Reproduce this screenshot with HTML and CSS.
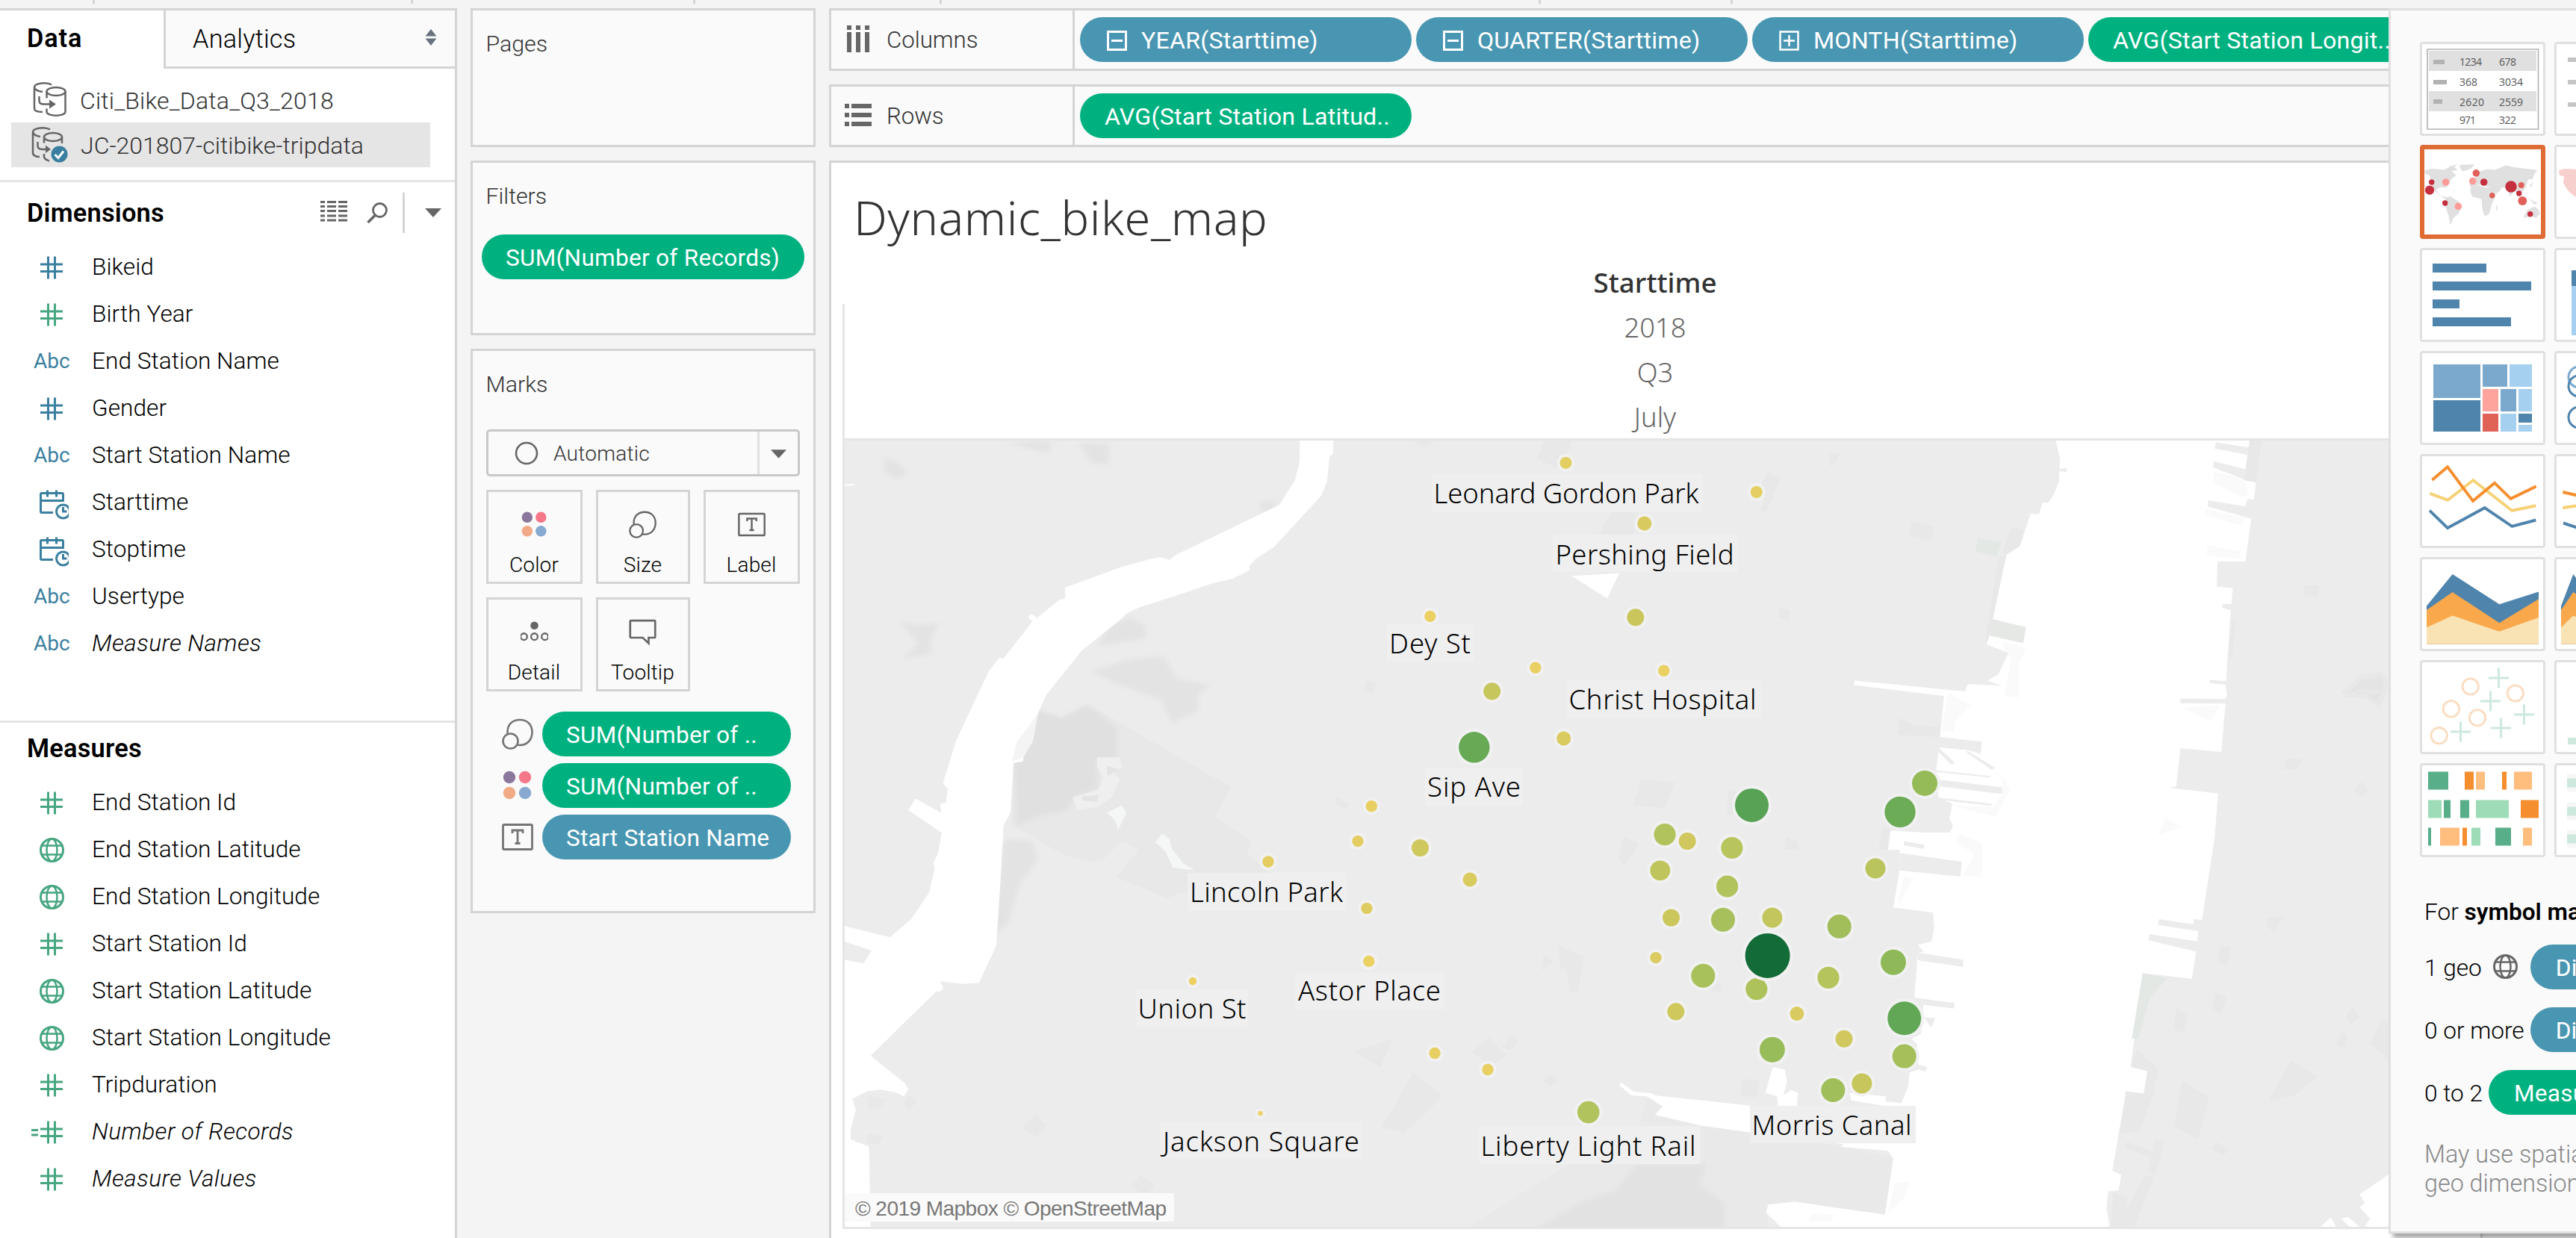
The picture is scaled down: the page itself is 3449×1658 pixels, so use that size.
FILE: index.html
```html
<!DOCTYPE html>
<html lang="en">
<head>
<meta charset="utf-8">
<title>Dynamic_bike_map</title>
<link rel="stylesheet" href="styles.css">
</head>
<body>
<svg class="defs" width="0" height="0" aria-hidden="true">
  <symbol id="hash" viewBox="0 0 60 63"><path d="M32.5 17.5v30M41.5 17.5v30M22 28h30M22 37.5h30" fill="none" stroke="currentColor" stroke-width="3"/></symbol>
  <symbol id="calc-hash" viewBox="0 0 60 63"><path d="M32.5 17.5v30M41.5 17.5v30M22 28h30M22 37.5h30M10 29.5h9M10 36h9" fill="none" stroke="currentColor" stroke-width="3"/></symbol>
  <symbol id="globe" viewBox="0 0 60 63"><g fill="none" stroke="currentColor"><circle cx="37.5" cy="32.5" r="15" stroke-width="3"/><ellipse cx="37.5" cy="32.5" rx="7" ry="15" stroke-width="2.5"/><path d="M24 26.5h27M24 38.500h27" stroke-width="2.5"/></g></symbol>
  <symbol id="datetime" viewBox="0 0 60 63"><g fill="none" stroke="currentColor" stroke-width="3"><path d="M39 45.500H24q-1.500 0-1.500-1.500V21q0-1.500 1.500-1.500h27q1.500 0 1.500 1.500v8.500H23M31.500 15.500v9M43.500 15.500v9"/><circle cx="52.500" cy="44" r="9"/><path d="M52.500 38v6h5"/></g></symbol>
  <symbol id="size" viewBox="0 0 42 42"><g fill="none" stroke="currentColor" stroke-width="2.600"><path d="M7.500 20.500V18C7.500 8.500 14 2 24 2s16.500 6.500 16.500 16.500S34 36 24 36l-4.500-.5"/><circle cx="11.500" cy="30.500" r="10"/></g></symbol>
  <symbol id="color" viewBox="0 0 42 42"><circle cx="10" cy="10" r="8.200" fill="#8c779c"/><circle cx="31" cy="10" r="8.200" fill="#f7778a"/><circle cx="10" cy="31" r="8.200" fill="#f2a985"/><circle cx="31" cy="31" r="8.200" fill="#88a9cf"/></symbol>
  <symbol id="label" viewBox="0 0 42 42"><rect x="1.500" y="4.500" width="39" height="33" rx="1.500" fill="none" stroke="currentColor" stroke-width="2.800"/><path d="M14 16v-4h14v4M21 12v17M17.500 29.500h7" fill="none" stroke="currentColor" stroke-width="2.800"/></symbol>
</svg>

<div class="toolbar"><i></i><i></i><i></i><i></i><i></i><i></i></div>

<div class="workspace">
  <aside class="data-pane">
    <div class="tabs">
      <div class="tab active">Data</div>
      <div class="tab">Analytics
        <svg width="16" height="22" viewBox="0 0 16 22"><path d="M8 0l7.500 9.500H.5zM8 22l7.500-9.500H.5z" fill="#68727f"/></svg>
      </div>
    </div>
    <div class="sources">
      <div class="source">
        <svg width="50" height="50" viewBox="0 0 50 50"><g fill="none" stroke="#666" stroke-width="2.500"><path d="M26 4.500C20 .5 3 2 3 8v28c0 3 4 5 11 5M3 8c1 4 5 5 11 6"/><ellipse cx="32" cy="13.500" rx="12.500" ry="5.500"/><path d="M19.500 13.500v9M44.500 13.500v27c0 7-25 7-25 0v-4M9.500 20v6c0 3 2 4.500 6 4.500h9"/></g><path d="M23 24.500l9 6-9 6z" fill="#666"/></svg>
        <span>Citi_Bike_Data_Q3_2018</span>
      </div>
      <div class="source selected">
        <svg width="50" height="50" viewBox="0 0 50 50"><g fill="none" stroke="#666" stroke-width="2.500"><path d="M25 4.500C19 .5 2 2 2 8v28c0 3 4 5 9 5M2 8c1 4 5 5 10 6"/><ellipse cx="29" cy="14.500" rx="12" ry="5.500"/><path d="M17 14.500v8M41 14.500V23M17 37v4c0 3 3 4 7 5.500M8.500 21v5c0 3 2 5 6 5h6"/></g><path d="M19 25.500l7 5.500-7 5z" fill="#666"/><circle cx="37.500" cy="37.500" r="11" fill="#3a7f9f"/><path d="M31.500 38l4.500 4.500 7-9" fill="none" stroke="#fff" stroke-width="3"/></svg>
        <span>JC-201807-citibike-tripdata</span>
      </div>
    </div>
    <section class="fields dimensions">
      <header>
        <h2>Dimensions</h2>
        <svg width="36" height="28" viewBox="0 0 36 28"><path d="M0 1.500h36M0 7.500h36M0 13.500h36M0 20h36M0 26h36" stroke="#666" stroke-width="3" stroke-dasharray="6 3 12 3 12 3"/></svg>
        <svg width="28" height="28" viewBox="0 0 28 28"><ellipse cx="17.500" cy="10.500" rx="9" ry="9" fill="none" stroke="#666" stroke-width="2.800"/><path d="M11.500 17L1.500 27" stroke="#666" stroke-width="3.500"/></svg>
        <b class="rule"></b>
        <svg width="22" height="12" viewBox="0 0 22 12"><path d="M0 0h22L11 12z" fill="#666"/></svg>
      </header>
      <ul>
        <li><svg class="dim"><use href="#hash"/></svg>Bikeid</li>
        <li><svg class="mea"><use href="#hash"/></svg>Birth Year</li>
        <li><span class="abc">Abc</span>End Station Name</li>
        <li><svg class="dim"><use href="#hash"/></svg>Gender</li>
        <li><span class="abc">Abc</span>Start Station Name</li>
        <li><svg class="dim"><use href="#datetime"/></svg>Starttime</li>
        <li><svg class="dim"><use href="#datetime"/></svg>Stoptime</li>
        <li><span class="abc">Abc</span>Usertype</li>
        <li class="generated"><span class="abc">Abc</span>Measure Names</li>
      </ul>
    </section>
    <section class="fields measures">
      <header><h2>Measures</h2></header>
      <ul>
        <li><svg class="mea"><use href="#hash"/></svg>End Station Id</li>
        <li><svg class="mea"><use href="#globe"/></svg>End Station Latitude</li>
        <li><svg class="mea"><use href="#globe"/></svg>End Station Longitude</li>
        <li><svg class="mea"><use href="#hash"/></svg>Start Station Id</li>
        <li><svg class="mea"><use href="#globe"/></svg>Start Station Latitude</li>
        <li><svg class="mea"><use href="#globe"/></svg>Start Station Longitude</li>
        <li><svg class="mea"><use href="#hash"/></svg>Tripduration</li>
        <li class="generated"><svg class="mea"><use href="#calc-hash"/></svg>Number of Records</li>
        <li class="generated"><svg class="mea"><use href="#hash"/></svg>Measure Values</li>
      </ul>
    </section>
  </aside>

  <div class="cards">
    <section class="card pages"><h3>Pages</h3></section>
    <section class="card filters"><h3>Filters</h3><div class="pill green">SUM(Number of Records)</div></section>
    <section class="card marks">
      <h3>Marks</h3>
      <div class="mark-type">
        <svg width="32" height="32" viewBox="0 0 32 32"><circle cx="16" cy="16" r="14" fill="none" stroke="#666" stroke-width="2.600"/></svg>
        <span>Automatic</span>
        <div class="arrow"><svg width="21" height="12" viewBox="0 0 22 12"><path d="M0 0h22L11 12z" fill="#666"/></svg></div>
      </div>
      <div class="shelves">
        <div><svg><use href="#color"/></svg>Color</div>
        <div><svg><use href="#size"/></svg>Size</div>
        <div><svg><use href="#label"/></svg>Label</div>
        <div><svg viewBox="0 0 42 42"><circle cx="21" cy="11" r="6" fill="#666"/><g fill="none" stroke="#666" stroke-width="2.600"><circle cx="5" cy="28" r="5"/><circle cx="21" cy="28" r="5"/><circle cx="37" cy="28" r="5"/></g></svg>Detail</div>
        <div><svg viewBox="0 0 42 42"><path d="M3 3.500h36q1 0 1 1v24q0 1-1 1h-9v8.500l-9-8.500H3q-1 0-1-1v-24q0-1 1-1z" fill="none" stroke="#666" stroke-width="3"/></svg>Tooltip</div>
      </div>
      <div class="encodings">
        <div><svg><use href="#size"/></svg><span class="pill green">SUM(Number of ..</span></div>
        <div><svg><use href="#color"/></svg><span class="pill green">SUM(Number of ..</span></div>
        <div><svg><use href="#label"/></svg><span class="pill blue">Start Station Name</span></div>
      </div>
    </section>
  </div>

  <main>
    <div class="shelf">
      <div class="shelf-name"><svg width="36" height="36" viewBox="0 0 36 36"><path d="M3 0h6v6H3zM15 0h6v6h-6zM27 0h6v6h-6zM3 9h6v27H3zM15 9h6v27h-6zM27 9h6v27h-6z" fill="#666"/></svg>Columns</div>
      <div class="pill blue"><svg width="27" height="27" viewBox="0 0 27 27"><path d="M1.500 1.500h24v24h-24zM6 13.500h15" fill="none" stroke="#fff" stroke-width="3"/></svg>YEAR(Starttime)</div>
      <div class="pill blue"><svg width="27" height="27" viewBox="0 0 27 27"><path d="M1.500 1.500h24v24h-24zM6 13.500h15" fill="none" stroke="#fff" stroke-width="3"/></svg>QUARTER(Starttime)</div>
      <div class="pill blue"><svg width="27" height="27" viewBox="0 0 27 27"><path d="M1.500 1.500h24v24h-24zM6 13.500h15M13.500 6v15" fill="none" stroke="#fff" stroke-width="2.500"/></svg>MONTH(Starttime)</div>
      <div class="pill green">AVG(Start Station Longit..</div>
    </div>
    <div class="shelf">
      <div class="shelf-name"><svg width="36" height="36" viewBox="0 0 36 36"><path d="M0 3h6v6H0zM0 15h6v6H0zM0 27h6v6H0zM9 3h27v6H9zM9 15h27v6H9zM9 27h27v6H9z" fill="#666"/></svg>Rows</div>
      <div class="pill green">AVG(Start Station Latitud..</div>
    </div>
    <section class="sheet">
      <h1>Dynamic_bike_map</h1>
      <div class="header-field">Starttime</div>
      <div class="pane">
        <div class="header-value">2018</div>
        <div class="header-value">Q3</div>
        <div class="header-value">July</div>
        <svg class="map" width="2170" height="1053" viewBox="0 0 2170 1053">
          <defs><filter id="soft" x="-10%" y="-10%" width="120%" height="120%"><feGaussianBlur stdDeviation="5"/></filter></defs>
          <rect width="2170" height="1053" fill="#ececec"/>
          <!-- western half: meadows, parks, Hackensack river -->
          <g transform="translate(-11 -10) scale(.70153 .6875)">
            <g fill="#e3e3e3" filter="url(#soft)">
              <path d="M92 45L120 60 137 78 115 90 90 75zM120 365L150 375 195 370 180 400 180 430 125 440 155 410zM485 465L560 440 625 435 650 480 715 490 690 510 690 540 640 565 620 520 540 490zM520 375L560 358 590 375 590 400 500 415zM330 790L375 795 385 830 350 880 325 960 300 975 318 800zM460 20L520 20 520 60 490 60zM325 18L410 15 405 40zM1100 14L1140 14 1120 25zM808 135L840 130 830 155 808 150z"/>
            </g>
            <path fill="#e8e8e8" d="M385 540L430 557 478 527 753 690 722 748 792 795 783 818 828 856 672 860 670 895 655 895 632 906 533 865 577 812 545 794 512 828 484 835 430 820 334 762 340 642z"/>
            <path fill="#e0e0e0" filter="url(#soft)" d="M385 540L430 555 478 530 537 575 535 630 495 640 500 690 455 710 440 735 390 745 345 765 338 642z"/>
            <path fill="#efefef" d="M497 632L540 632 545 650 530 662 540 675 525 710 500 728 460 735 450 710 500 695 508 672 498 650z"/>
            <path fill="#e4e4e4" d="M515 648L540 655 518 668zM468 708L500 705 498 718 470 716z"/>
            <path fill="#f4f7f6" d="M516 740L545 725 553 740 538 772 530 752zM608 797L622 780 635 790 640 810 662 838 683 852 642 846 628 815z"/>
            <path fill="#e8e8e8" d="M1350 14L1405 14 1383 72 1337 50zM1012 480L1032 488 1022 507 1005 500zM956 708L978 722 972 733 950 720zM988 1205L1062 1180 1038 1236zM1101 1246L1157 1291 1130 1320 1083 1363 1040 1352zM1245 1176L1278 1210 1250 1235 1213 1205zM1290 1173L1302 1185 1285 1202 1270 1195zM1378 997L1426 1020 1415 1091 1399 1088 1393 1045 1381 1040zM380 1328L402 1348 380 1372 355 1352zM580 1445L608 1467 590 1485 562 1468zM1478 155L1530 155 1520 200 1455 198zM1362 1250L1378 1262 1363 1275 1348 1262zM1350 1015L1367 1028 1345 1048zM140 1290L155 1302 138 1318 127 1306zM1535 675L1600 680 1580 730 1520 725z"/>
            <path fill="#fff" d="M884 14H948V40L941 45 936 95 925 122 834 223 800 245 787 260 790 266 755 284 720 292 708 296 650 316 582 338 555 350 540 365 468 424 400 510 385 545 375 585 357 630 356 640 338 642 332 740 319 763 313 870 305 998 272 1071 240 1073 197 1068 204 1080 198 1088 190 1088 65 1213 130 1266 137 1278 128 1292 112 1284 84 1279 58 1282 30 1297 37 1318 27 1357V1376L62 1390 65 1546H14V1026L52 1033 67 1008 14 990V960L102 982 143 946 177 895 188 845 184 840 193 820 201 779 137 734 151 712 200 740 198 722 209 720 212 692 203 683 228 600 290 465 310 438 318 440 374 367 366 358 372 352 383 360 425 325 436 322V301L540 262 600 245 618 242 636 247 648 237 835 145 845 140 875 92 884 55zM1403 278L1494 273 1471 322zM14 100L34 99V102L14 103z"/>
            <path fill="#f4f4f4" d="M385 545L375 600 357 632 335 640 345 600 368 570z"/>
            <path fill="#e8e8e8" d="M58 1290L95 1300 85 1312 62 1318zM60 1365L88 1370 80 1385 58 1382z"/>
          </g>
          <!-- eastern half: Jersey City waterfront, Hudson river, Manhattan -->
          <g transform="translate(969 -10) scale(.70153 .6875)">
            <path fill="#e9e9e9" d="M150 1295L180 1310 165 1328 346 1362 520 1390 620 1413 604 1522 377 1500 382 1546H-190L0 1424 135 1350z"/>
            <path fill="#e2e2e2" filter="url(#soft)" d="M-62 1552L20 1500 90 1475 130 1424H262L250 1465 300 1502 295 1552z"/>
            <path fill="#e8e8e8" d="M655 172L698 182 692 210 650 200zM845 182L868 188 862 220 836 237 828 232zM380 75L405 90 375 157 367 148 375 130 362 115zM498 38L518 42 512 55 500 66zM404 340L422 345 420 365 400 358zM140 677L194 680 180 730 125 725zM105 787L132 797 128 815 105 840 95 830zM417 787L438 797 437 812 413 810zM632 555L660 570 713 572 709 592 628 588zM600 770L612 770 610 812 592 808zM330 1257L365 1262 358 1295 328 1290zM305 695L325 700 320 745 302 742zM275 1068L293 1072 290 1090 272 1088zM822 240L836 237 800 412 795 405z"/>
            <path fill="#e4e8e5" d="M782 204L827 212 818 240 776 230z"/>
            <path fill="#fff" d="M930 14L938 50 936 95 925 122 915 136 905 135 898 158 882 157 862 220 836 237 825 290 803 396 798 412 840 428 820 470 800 482 827 492 762 489 757 503 722 500 546 482 545 491 717 512 709 592 702 657 706 710 733 722 727 750 734 765 728 778 680 778 615 774 610 812 632 812V852L620 924 696 934 698 965 693 990 667 997 678 1010 667 1012 660 1100 678 1103 673 1170 655 1180 665 1190 668 1240 651 1245 648 1275 635 1305 606 1302V1292L536 1285 540 1300 600 1310 520 1390 610 1398 620 1413 604 1522 518 1510 432 1497 382 1503 377 1518 405 1546H1033L1027 1510 1030 1477 1050 1475 1055 1445 1038 1437 1064 1282 1098 1287 1105 1243 1073 1235 1080 1180 1096 1052 1190 1063 1198 1010 1107 988 1109 976 1200 990 1202 970 1125 958 1127 947 1193 957V947L1209 948 1233 790 1240 702 1146 691 1160 688 1168 614 1246 621 1254 527 1168 526V517L1254 518 1257 510 1254 490 1224 487V481L1255 483 1264 345 1248 340V333L1265 333 1268 302 1237 299 1239 250H1292L1303 167 1220 143 1221 131 1292 143 1296 128 1308 130 1312 96 1290 90 1230 67 1232 55 1292 70 1296 42 1233 30 1236 18 1298 28 1300 14z"/>
            <path fill="#fff" d="M97 1270L101 1265 125 1283 160 1286 165 1290 346 1310 400 1315 560 1330V1390L346 1362 258 1350 165 1328 180 1312 150 1292 120 1290zM390 1235L413 1240 417 1265 410 1290 425 1280 438 1285 436 1312 400 1312 398 1292 376 1285zM1600 1420L1510 1483 1520 1500 1510 1508 1530 1530 1520 1546H1600zM1435 1546L1455 1528 1465 1546zM1475 1530L1488 1527 1510 1546H1490z"/>
            <path fill="#ececec" d="M709 592L789 601 787 625 765 618 705 612zM763 620L814 652 808 656 757 620zM697 612L706 612 738 643 730 645zM702 657L806 668 805 671 702 660zM705 675L828 690 827 703 705 688zM706 710L808 722 807 726 706 714zM632 818L751 835 748 864 632 852zM640 795L680 802 678 810 640 803zM667 1012L754 1026 753 1040 667 1027zM662 1100L737 1110 736 1121 662 1112zM678 1137L700 1140 692 1158zM665 1230L684 1234 682 1244 665 1238zM936 70L951 68V76L936 74z"/>
            <path fill="#e5e8e5" d="M809 362L873 378 868 409 801 394z"/>
            <path fill="#fafafa" d="M825 405L873 418 860 450 860 515 832 512 845 440zM725 505L768 530 740 560 735 582 712 580zM828 665L843 695 815 748 730 725 810 728 828 703zM745 780L790 800V865L752 862 775 820 740 800zM640 862L658 868 632 918 628 915zM622 1460L652 1458 640 1490 610 1520zM1140 750L1172 768 1125 782zM1170 535L1245 530 1225 560zM1232 75L1290 90 1298 120 1285 125 1230 95zM1216 148L1290 165 1285 180 1215 160zM1220 218L1282 230 1284 245 1218 238zM470 1520L508 1523 500 1535 455 1535z"/>
            <path fill="#e8e8e8" d="M1300 14L1323 14 1312 96 1290 92zM1268 360L1274 370 1266 440 1260 435zM1405 297L1433 297 1430 318 1403 315zM1370 633L1400 635 1390 655 1364 655zM1513 679L1528 693 1515 710 1500 695zM1475 505L1510 470 1552 465 1568 490 1548 537 1520 515 1485 515zM1335 945L1365 940 1345 972 1333 960zM1244 998L1264 1003 1258 1038 1240 1030zM1235 1090L1256 1100 1245 1130 1228 1120zM1160 1120L1183 1135 1172 1170 1155 1160zM1170 1262L1223 1292 1202 1375 1156 1350zM1380 1222L1430 1255 1385 1290 1335 1302zM1495 1120L1510 1138 1495 1152 1482 1140zM1476 1168L1486 1172 1482 1198 1465 1193zM1552 1140L1568 1150V1225L1530 1190zM1235 1380L1260 1395 1250 1408 1228 1395zM1120 1375L1138 1380 1120 1445 1105 1438zM1065 1380L1115 1400 1110 1410 1062 1392zM1085 1200L1128 1240 1115 1275 1120 1280 1090 1360 1053 1365 1064 1282 1098 1287 1105 1243 1075 1235zM1100 1445L1118 1450 1080 1546H1035L1040 1480 1068 1490 1060 1520z"/>
            <path fill="#e4e8e5" d="M1096 1052L1143 1062 1110 1100 1088 1180 1075 1180z"/>
            <path fill="#e4e4e4" d="M1490 505L1515 480 1550 475 1556 490 1543 525 1520 505z M1503 500L1550 500 1545 508 1503 508z" fill-rule="evenodd"/>
          </g>
          <!-- stations -->
          <g class="stations">
            <circle cx="965.500" cy="29.900" r="8" fill="#e3ce62"/><circle cx="1220.800" cy="69" r="8" fill="#e5ce62"/>
            <circle cx="1070.800" cy="111" r="9.500" fill="#d8ca5f"/><circle cx="783.800" cy="235.400" r="7.700" fill="#edd062"/>
            <circle cx="1058.800" cy="236.800" r="11.500" fill="#cbc65c"/><circle cx="924.800" cy="304.200" r="7.700" fill="#eacf62"/>
            <circle cx="1096.700" cy="308.300" r="7.700" fill="#ebd062"/><circle cx="866.600" cy="335.800" r="11.500" fill="#c6c65c"/>
            <circle cx="842.800" cy="410.800" r="20.700" fill="#68a955"/><circle cx="962.700" cy="399" r="9.500" fill="#dacb60"/>
            <circle cx="705.300" cy="489.800" r="7.700" fill="#e9cf62"/><circle cx="687" cy="536.600" r="7.700" fill="#e4cd61"/>
            <circle cx="770.500" cy="545.500" r="11.500" fill="#cec85d"/><circle cx="837.100" cy="588" r="9.500" fill="#d9cb60"/>
            <circle cx="567" cy="564" r="7.700" fill="#e4cd61"/><circle cx="699" cy="626.600" r="7.700" fill="#dfcc61"/>
            <circle cx="701.800" cy="697.400" r="7.700" fill="#ebd062"/><circle cx="466" cy="724" r="5.200" fill="#efd163"/>
            <circle cx="790" cy="820.500" r="7.700" fill="#e8cf62"/><circle cx="861" cy="842.500" r="7.700" fill="#e8cf62"/>
            <circle cx="556.500" cy="901" r="3.300" fill="#f0d264"/><circle cx="995.700" cy="899.600" r="14.800" fill="#b0c35c"/>
            <circle cx="1214.500" cy="488.400" r="22.500" fill="#58a255"/><circle cx="1446" cy="458.900" r="17" fill="#95bb58"/>
            <circle cx="1413" cy="497.400" r="20.700" fill="#6cac57"/><circle cx="1098" cy="527.600" r="14.600" fill="#b1c35c"/>
            <circle cx="1128.200" cy="536.600" r="11.500" fill="#d0c85e"/><circle cx="1187.900" cy="545.500" r="14.600" fill="#b8c45c"/>
            <circle cx="1091.800" cy="575.800" r="13.400" fill="#bfc55c"/><circle cx="1380" cy="573" r="13.500" fill="#bac45c"/>
            <circle cx="1181.600" cy="597" r="14.600" fill="#b1c35c"/><circle cx="1106.500" cy="639" r="11.500" fill="#cbc75d"/>
            <circle cx="1176" cy="641.800" r="16" fill="#a8c05b"/><circle cx="1241.900" cy="639" r="13.500" fill="#c3c65d"/>
            <circle cx="1331.700" cy="650.700" r="16" fill="#a2be5a"/><circle cx="1220.800" cy="734.600" r="14.600" fill="#aec25c"/>
            <circle cx="1235.600" cy="689.900" r="30" fill="#136c37"/><circle cx="1086" cy="692.600" r="7.700" fill="#dccb60"/>
            <circle cx="1404" cy="698.800" r="17" fill="#8fb958"/><circle cx="1317" cy="719.400" r="14.600" fill="#b6c45c"/>
            <circle cx="1149.300" cy="716.700" r="16" fill="#a9c15b"/><circle cx="1112.800" cy="764.800" r="11.500" fill="#cec85d"/>
            <circle cx="1274.900" cy="767.600" r="9.500" fill="#dacb60"/><circle cx="1338" cy="801.300" r="11.500" fill="#d0c85e"/>
            <circle cx="1418.700" cy="824.600" r="16" fill="#a5bf5b"/><circle cx="1418.700" cy="773.800" r="22.500" fill="#61a756"/>
            <circle cx="1241.900" cy="815.700" r="17" fill="#98bc59"/><circle cx="1323.300" cy="870" r="16" fill="#a0be5a"/>
            <circle cx="1361.900" cy="861" r="13.500" fill="#c6c65d"/>
          </g>
          <g fill="#efefef">
            <rect x="786" y="45" width="363" height="50"/><rect x="948" y="126" width="248" height="50"/><rect x="726" y="246" width="117" height="50"/>
            <rect x="967" y="321" width="260" height="51"/><rect x="777" y="439" width="131" height="50"/><rect x="459" y="579" width="213" height="51"/>
            <rect x="603" y="712" width="200" height="50"/><rect x="390" y="735" width="150" height="51"/><rect x="422" y="912" width="271" height="50"/>
            <rect x="849" y="918" width="297" height="51"/><rect x="1212" y="891" width="222" height="50"/>
          </g>
          <g class="station-names">
            <text x="788.500" y="84" textLength="355">Leonard Gordon Park</text>
            <text x="951.500" y="165.500" textLength="239">Pershing Field</text>
            <text x="729" y="285" textLength="109">Dey St</text>
            <text x="969.500" y="360" textLength="251">Christ Hospital</text>
            <text x="780" y="477" textLength="125">Sip Ave</text>
            <text x="462" y="618" textLength="205">Lincoln Park</text>
            <text x="607" y="750" textLength="191">Astor Place</text>
            <text x="392.500" y="774" textLength="145">Union St</text>
            <text x="426" y="952" textLength="263">Jackson Square</text>
            <text x="851.500" y="957.500" textLength="288">Liberty Light Rail</text>
            <text x="1214.500" y="930" textLength="214">Morris Canal</text>
          </g>
          <rect x="0" y="1008" width="441" height="38" fill="#fafafa"/>
          <text class="credit" x="14" y="1038" textLength="417">© 2019 Mapbox © OpenStreetMap</text>
        </svg>
      </div>
    </section>
  </main>
</div>

<aside class="show-me">
  <div class="charts">
    <div class="chart">
      <svg viewBox="0 0 168 126"><path d="M12 12h144v27H12zM12 66h144v27H12z" fill="#e0e0e0"/><path d="M10 10h148.500v107H10z" fill="none" stroke="#b2b2b2" stroke-width="1.600"/><path d="M18 24h15v6H18zM18 51h18v6H18zM18 77h12v6H18z" fill="#b2b2b2"/>
        <g class="tiny"><text x="53" y="31.500" textLength="30">1234</text><text x="106" y="31.500" textLength="23">678</text><text x="53" y="58.500" textLength="24">368</text><text x="106" y="58.500" textLength="32">3034</text><text x="53" y="85.500" textLength="33">2620</text><text x="106" y="85.500" textLength="32">2559</text><text x="53" y="110" textLength="22">971</text><text x="106" y="110" textLength="23">322</text></g></svg>
    </div>
    <div class="chart"><svg viewBox="0 0 168 126"><path d="M18 21h20v6H18zM18 51h20v6H18zM18 81h20v6H18z" fill="#c4c4c4"/></svg></div>

    <div class="chart chosen">
      <svg viewBox="0 0 168 126">
        <g transform="translate(-60 -154) scale(.33333 .35714)" fill="#e0e0e0">
          <path d="M200 527L225 521 280 524 300 512 332 505 318 515 332 525 308 530 326 545 305 560 298 575 285 592 262 590 245 600 262 622 290 628 282 634 258 620 240 603 222 575 220 545 200 540zM342 506L400 505 385 520 352 531 340 515zM282 632L300 624 330 640 350 660 335 690 315 705 303 733 296 700 280 655zM385 590L405 580 440 590 470 590 485 620 470 650 458 690 440 699 430 670 428 635 390 625 382 605zM380 570L400 555 420 530 450 522 480 525 525 508 560 515 652 526 640 540 632 560 615 560 605 590 590 610 575 600 580 625 560 605 542 625 530 595 510 590 500 605 485 615 465 590 440 585 415 580 395 590 380 588zM598 698L612 675 640 662 655 672 662 690 645 706 625 695 600 706zM484 668L493 655 490 680zM612 625L630 640 655 650 640 655zM620 585L635 570 628 590z"/>
        </g>
        <g fill="#fe9c98"><circle cx="34.700" cy="50" r="4.800"/><circle cx="70.700" cy="48.500" r="4.800"/><circle cx="51.300" cy="82.400" r="4.800"/></g>
        <g fill="#e2605a"><circle cx="75.300" cy="37.800" r="4.800"/><circle cx="135.700" cy="54" r="4"/><circle cx="137.300" cy="75" r="6"/><circle cx="96.700" cy="67.800" r="3.700"/></g>
        <g fill="#c5303f"><circle cx="13" cy="60.600" r="6.200"/><circle cx="15.700" cy="50" r="3.700"/><circle cx="85.700" cy="50" r="4.800"/><circle cx="122" cy="56" r="7.700"/><circle cx="132.700" cy="65" r="3.700"/><circle cx="33.700" cy="78" r="3.700"/><circle cx="147.700" cy="92.800" r="3.700"/></g>
      </svg>
    </div>
    <div class="chart"><svg viewBox="0 0 168 126"><path d="M6 34l8-2 20 1v40l-8-5-8-7-6-10 1-9-6-1z" fill="#f7d0ce"/></svg></div>

    <div class="chart"><svg viewBox="0 0 168 126"><path d="M17 21h72v12H17zM17 45h132v12H17zM17 69h36v12H17zM17 93h105v12H17z" fill="#4f84ad"/></svg></div>
    <div class="chart"><svg viewBox="0 0 168 126"><path d="M23 30h20v21H23z" fill="#4f84ad"/><path d="M23 51h20v66H23z" fill="#a5d0f0"/></svg></div>

    <div class="chart">
      <svg viewBox="0 0 168 126"><path d="M18 18h63v45H18zM84 18h33v30H84zM108 51h21v30h-21z" fill="#7ba9ce"/><path d="M18 66h63v42H18zM132 84h18v12h-18z" fill="#4f84ad"/><path d="M120 18h30v30h-30zM132 51h18v30h-18zM108 84h21v24h-21zM132 99h18v9h-18z" fill="#a5d0f0"/><path d="M84 51h21v30H84z" fill="#fea49c"/><path d="M84 84h21v24H84z" fill="#e06156"/></svg>
    </div>
    <div class="chart"><svg viewBox="0 0 168 126"><g fill="none" stroke-width="3"><circle cx="33" cy="35" r="14" stroke="#7ba9ce"/><circle cx="33" cy="47" r="14" stroke="#4f84ad"/><circle cx="33" cy="89" r="14" stroke="#4f84ad"/></g></svg></div>

    <div class="chart">
      <svg viewBox="0 0 168 126"><g transform="translate(-60 -18.500) scale(.33333 .3699)" fill="none" stroke-width="11"><path d="M220 193L292 217 394 145 550 255 646 237" stroke="#f6d176"/><path d="M229 144L291 97 393 220 480 155 545 212 647 167" stroke="#f58e2e"/><path d="M219 255L291 318 440 245 550 312 646 289" stroke="#4f84ad"/></g></svg>
    </div>
    <div class="chart"><svg viewBox="0 0 168 126"><g transform="translate(-240 -18.500) scale(.33333 .3699)" fill="none" stroke-width="11"><path d="M754 245L830 235" stroke="#f6d176"/><path d="M754 188L830 204" stroke="#f58e2e"/><path d="M756 300L830 322" stroke="#4f84ad"/></g></svg></div>

    <div class="chart">
      <svg viewBox="0 0 168 126"><g transform="translate(-60 -156.500) scale(.33333 .3699)"><path d="M207 600L311 485 499 594 657 549V738H207z" fill="#4f84ad"/><path d="M207 615L311 550 499 662 657 575V738H207z" fill="#f9a84b"/><path d="M207 678L311 635 499 693 657 642V738H207z" fill="#f9e2b4"/></g></svg>
    </div>
    <div class="chart"><svg viewBox="0 0 168 126"><g transform="translate(-240 -156.500) scale(.33333 .3699)"><path d="M747 600L796 485 860 560V738H747z" fill="#4f84ad"/><path d="M747 615L796 550 860 590V738H747z" fill="#f9a84b"/><path d="M747 678L796 635 860 660V738H747z" fill="#f9e2b4"/></g></svg></div>

    <div class="chart">
      <svg viewBox="0 0 168 126"><g fill="none" stroke="#fbdcc0" stroke-width="2.800"><circle cx="67.700" cy="35.500" r="10.700"/><circle cx="127.800" cy="44.500" r="10.700"/><circle cx="41.900" cy="65.400" r="10.700"/><circle cx="77" cy="77.300" r="10.700"/><circle cx="25.700" cy="101.200" r="10.700"/></g><path d="M92 24h27M105.500 10.500v27M81 55h27M94.500 41.500v27M126 73h27M139.500 59.500v27M95 91h27M108.500 77.500v27M41 96h27M54.500 82.500v27" stroke="#cde8dd" stroke-width="3"/></svg>
    </div>
    <div class="chart"><svg viewBox="0 0 168 126"><path d="M18 104h20v9H18z" fill="#cde8dd"/></svg></div>

    <div class="chart">
      <svg viewBox="0 0 168 126"><path d="M11 11.500h27v24H11zM32 49.500h9v24h-9zM54 49.500h12v24H54zM11 86.500h4v24h-4zM101 86.500h21v24h-21z" fill="#57ae89"/><path d="M60 11.500h12v24H60zM110 11.500h6v24h-6zM135 49.500h24v24h-24zM57 86.500h6v24h-6z" fill="#f58e2e"/><path d="M75 11.500h12v24H75zM126 11.500h24v24h-24zM27 86.500h26v24H27zM138 86.500h12v24h-12z" fill="#ffbd7e"/><path d="M11 49.500h18v24H11zM75 49.500h44v24H75zM69 86.500h12v24H69z" fill="#9edcb7"/></svg>
    </div>
    <div class="chart"><svg viewBox="0 0 168 126"><path d="M17 14.500h20v24H17zM17 52.500h20v24H17zM17 89.500h20v24H17z" fill="#f6f6f6"/><path d="M17 20.500h20v12H17zM17 58.500h20v12H17zM17 95.500h20v12H17z" fill="#cde8dd"/></svg></div>
  </div>
  <p class="for">For <strong>symbol maps</strong></p>
  <p class="need"><span>1 geo</span><svg><use href="#globe"/></svg><span class="pill blue">Dimension</span></p>
  <p class="need"><span>0 or more</span><span class="pill blue">Dimensions</span></p>
  <p class="need"><span>0 to 2</span><span class="pill green">Measures</span></p>
  <p class="hint">May use spatial<br>geo dimension</p>
</aside>
</body>
</html>
```
FILE: styles.css
```css
* { box-sizing: border-box; }
body {
  margin: 0;
  height: 1658px;
  overflow: hidden;
  position: relative;
  background: #f4f4f4;
  color: #000;
  font: 350 31.6px Roboto, "Liberation Sans", sans-serif;
  white-space: nowrap;
}
h1, h2, h3, p, ul { margin: 0; padding: 0; font-weight: inherit; font-size: inherit; }
svg { display: block; flex: none; }
.defs { position: absolute; }

.toolbar {
  height: 11px;
  display: grid;
  grid-template-columns: 426px 378px 330px 802px 257px auto;
  padding-left: 124px;
}
.toolbar i { width: 3px; height: 5px; background: #d4d4d4; }

.workspace { display: flex; gap: 18px; height: 1647px; }

/* data pane */
.data-pane {
  width: 612px;
  flex: none;
  background: #fff;
  border: solid #d4d4d4;
  border-width: 3px 3px 0 0;
}
.tabs { display: flex; height: 78px; font-size: 34.3px; letter-spacing: 0.2px; }
.tab {
  flex: 1;
  display: flex;
  align-items: center;
  justify-content: space-between;
  padding: 0 24px 0 36px;
  background: #fafafa;
  border: solid #d4d4d4;
  border-width: 0 0 3px 3px;
}
.tab svg { margin-top: -4px; }
.tab.active {
  flex: 0 0 219px;
  background: none;
  border: 0;
  padding: 0 0 4px 36px;
  font-weight: 600;
  letter-spacing: 0.9px;
}
.sources { padding: 12px 33px 17px 15px; border-bottom: 3px solid #e5e5e5; font-size: 32px; letter-spacing: 0.2px; color: #333; }
.source { display: flex; align-items: center; gap: 14px; height: 60px; padding-left: 28px; }
.source.selected { background: #e5e5e5; padding-left: 27px; gap: 16px; letter-spacing: 0; }
.source span { padding-top: 1px; }

.fields header { display: flex; align-items: center; height: 81.5px; padding-left: 36px; }
.fields h2 { font-size: 34.4px; font-weight: 600; letter-spacing: 0.2px; }
.dimensions { height: 724px; border-bottom: 3px solid #e5e5e5; }
.dimensions header svg:nth-of-type(1) { margin: -3px 0 0 auto; }
.dimensions header svg:nth-of-type(2) { margin-left: 26px; }
.dimensions header .rule { width: 3px; height: 54px; margin: 0 27px 0 20px; background: #d4d4d4; }
.dimensions header svg:nth-of-type(3) { margin-right: 18px; }
.measures header { height: 75px; padding-bottom: 8px; }
.fields li { display: flex; align-items: center; height: 63px; padding-left: 32px; letter-spacing: 0.05px; }
.fields li svg { width: 60px; height: 63px; margin-right: 31px; }
.dim { color: #3a7f9f; }
.mea { color: #46a680; }
.abc { width: 78px; margin-left: 13px; font-size: 28px; font-weight: 400; color: #3a7f9f; letter-spacing: 0; }
.generated { font-style: italic; }
.fields .generated { letter-spacing: 0.45px; }
.generated .abc { font-style: normal; letter-spacing: 0; }

/* pills */
.pill {
  display: flex;
  align-items: center;
  height: 60px;
  padding: 2px 33px 0;
  border-radius: 30px;
  color: #fff;
  font-weight: 450;
  letter-spacing: 0.2px;
}
.green { background: #00b180; }
.blue { background: #4996b2; }

/* cards */
.cards { width: 462px; flex: none; display: flex; flex-direction: column; gap: 18px; }
.card { border: 3px solid #d4d4d4; background: #fafafa; padding: 15px 18px 0; }
.card h3 { margin-left: -0.5px; font-size: 30.3px; line-height: 60px; color: #333; }
.pages { height: 186px; }
.filters { height: 234px; }
.filters .pill { margin: 21px -6px 0; padding-left: 32px; font-size: 31.5px; letter-spacing: 0.3px; }
.marks { height: 756px; }
.mark-type {
  display: flex;
  align-items: center;
  height: 63px;
  margin-top: 30px;
  padding-left: 35px;
  border: 3px solid #c8c8c8;
  border-radius: 5px;
  font-size: 28px;
  letter-spacing: 0.25px;
  color: #333;
}
.mark-type span { flex: 1; padding: 2px 0 0 20px; }
.arrow { width: 54px; height: 57px; padding: 24px 0 0 15px; border-left: 3px solid #e0e0e0; }
.shelves { display: grid; grid-template-columns: 129px 126px 129px; gap: 18px; margin-top: 18px; }
.shelves div {
  display: flex;
  flex-direction: column;
  align-items: center;
  gap: 19px;
  height: 126px;
  padding: 25px 1px 0 0;
  border: 3px solid #d4d4d4;
  font-size: 28px;
  letter-spacing: 0.15px;
  color: #000;
}
.shelves svg { width: 37px; height: 37px; color: #666; }
.encodings { display: grid; gap: 9px; margin-top: 27px; }
.encodings div { display: flex; align-items: center; padding-left: 21px; }
.encodings svg { width: 42px; height: 42px; color: #757575; }
.encodings .pill { width: 333px; margin-left: 12px; padding-left: 32px; padding-right: 0; font-size: 31.5px; letter-spacing: 0.3px; }

/* shelves and sheet */
main { flex: 1; min-width: 0; display: flex; flex-direction: column; gap: 18px; }
.shelf {
  display: flex;
  align-items: center;
  gap: 6px;
  height: 84px;
  overflow: hidden;
  flex: none;
  border: solid #d4d4d4;
  border-width: 3px 0 3px 3px;
  background: #fafafa;
}
.shelf-name {
  display: flex;
  align-items: center;
  gap: 20px;
  width: 326px;
  height: 78px;
  padding-left: 18px;
  border-right: 3px solid #d4d4d4;
  margin-right: 1px;
  font-size: 31.2px;
  color: #333;
  flex: none;
}
.shelf-name svg { margin-top: -3px; }
.shelf .pill { width: 444px; flex: none; font-size: 32.2px; padding-right: 0; }
.shelf .pill svg { margin: 0 19px 0 3px; }
.sheet {
  width: 2214px;
  flex: 1;
  padding-top: 22px;
  border: solid #d4d4d4;
  border-width: 3px 3px 0 3px;
  background: #fff;
  font-family: "Noto Sans", sans-serif;
}
.sheet h1 { padding: 1px 0 0 30px; height: 100px; font-size: 63px; line-height: 100px; font-weight: 300; letter-spacing: 0.55px; color: #333; }
.header-field, .header-value { width: 2170px; height: 60px; padding-top: 1px; text-align: center; line-height: 60px; font-size: 36.3px; color: #666; }
.header-field { margin: 7px 0 0 18px; font-weight: 500; font-size: 36.8px; color: #333; }
.header-value { font-weight: 300; }
.pane { width: 2173px; margin-left: 15px; border-left: 3px solid #e5e5e5; border-bottom: 3px solid #e5e5e5; }
.map { border-top: 3px solid #e5e5e5; height: 1056px; }
.stations circle { stroke: #f1f1f1; stroke-width: 8px; paint-order: stroke; }
.station-names { font: 350 36.5px "Noto Sans", sans-serif; fill: #000; }
.credit { font: 28px "Liberation Sans", sans-serif; fill: #777; }

/* chart picker */
.show-me {
  position: absolute;
  left: 3198px;
  top: 11px;
  width: 251px;
  height: 1641px;
  padding: 42px 0 0 39px;
  border: solid #e0e0e0;
  border-width: 3px 0 3px 3px;
  background: #fafafa;
  box-shadow: 6px 6px 6px rgba(0, 0, 0, .35);
}
.charts { display: grid; grid-template-columns: 168px 168px; gap: 12px; margin-bottom: 44px; }
.chart { height: 126px; border: 3px solid #e0e0e0; border-radius: 4px; background: #fff; }
.chart svg { width: 168px; height: 126px; margin: -3px; }
.chosen { border: 6px solid #e06c35; }
.chosen svg { margin: -6px; }
.tiny { font: 14px "Open Sans", sans-serif; fill: #555; }
.for, .need, .hint { padding-left: 6px; }
.for { line-height: 60px; margin-bottom: 13px; }
.for strong { font-weight: 600; }
.need { display: flex; align-items: center; height: 60px; margin-bottom: 24px; }
.need > span:first-child { padding-top: 3px; }
.need svg { width: 60px; height: 63px; color: #666; margin: -4px 11px 0 -6px; }
.need .pill { padding: 3px 34px 0; margin-left: 8px; }
.need svg + .pill { margin-left: 0; }
.hint { line-height: 39px; margin-top: 34px; font-size: 32.3px; color: #888; }
```
